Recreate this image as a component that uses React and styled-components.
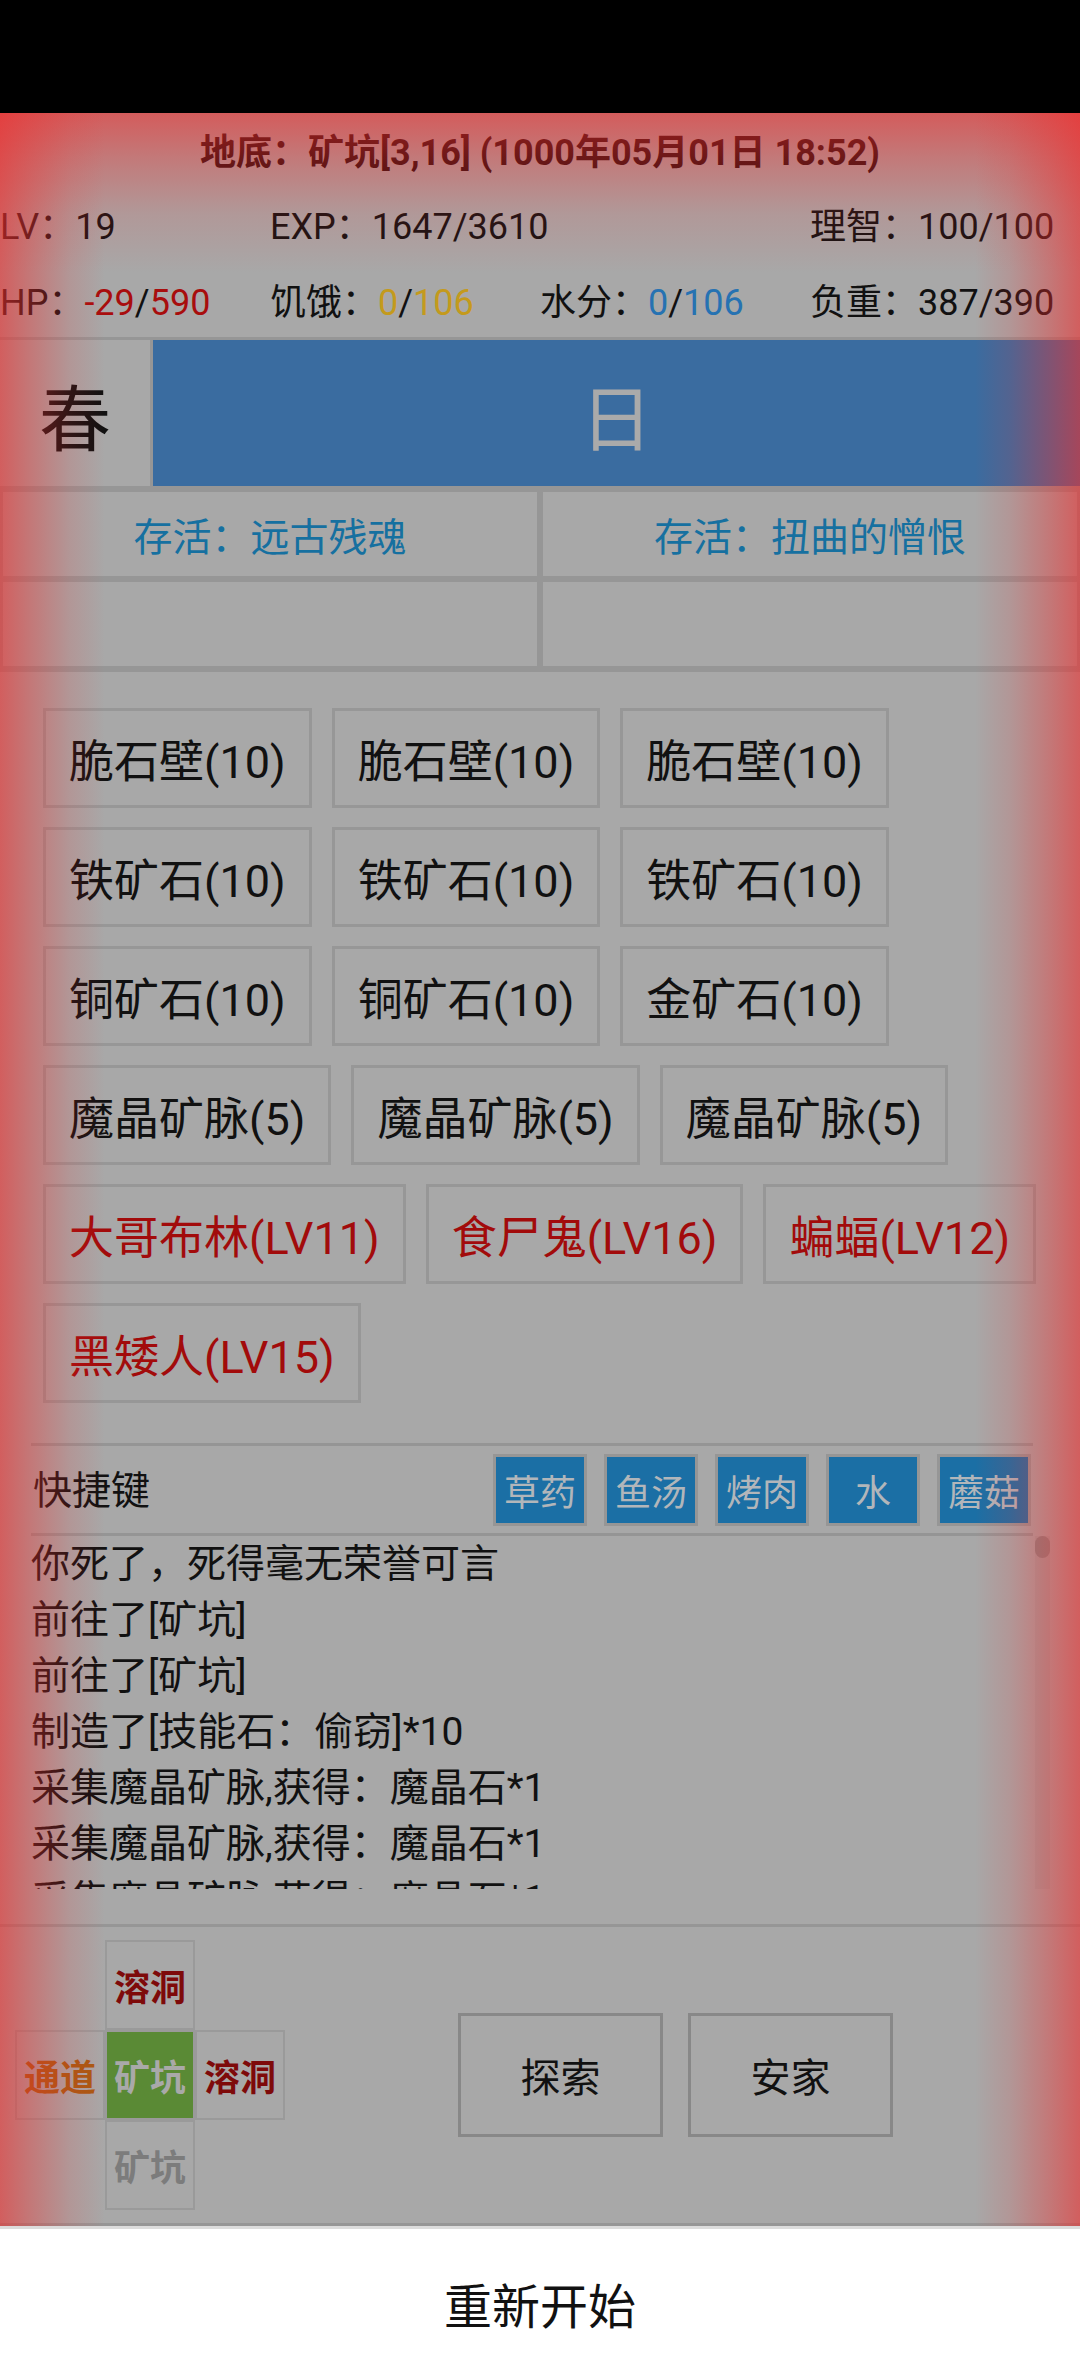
import React from 'react';
import styled, { createGlobalStyle } from 'styled-components';

const GlobalStyle = createGlobalStyle`
  html, body { margin: 0; padding: 0; background: #fff; }
  body {
    width: 1080px;
    height: 2376px;
    overflow: hidden;
    font-family: Roboto, "Noto Sans CJK SC", "Noto Sans", sans-serif;
    color: #111;
  }
  * { box-sizing: border-box; }
`;

const Screen = styled.div`
  position: relative;
  width: 1080px;
  height: 2376px;
  display: flex;
  flex-direction: column;
  background: #a8a8a8;
  overflow: hidden;
`;

const StatusBar = styled.div`
  flex: none;
  height: 113px;
  background: #000;
`;

const Title = styled.div`
  height: 72px;
  display: flex;
  align-items: center;
  justify-content: center;
  font-size: 36px;
  font-weight: 700;
  color: #1c0a0a;
  white-space: pre;
`;

const StatRow = styled.div`
  height: 76px;
  display: grid;
  grid-template-columns: repeat(4, 270px);
  align-items: center;
  font-size: 36px;
`;

const Stat = styled.span`
  white-space: nowrap;
  grid-column: ${(p) => p.$col || 'auto'};
`;

const Val = styled.span`
  color: ${(p) => p.$c};
`;

const SeasonRow = styled.div`
  height: 152px;
  display: flex;
  border-top: 3px solid #969696;
  border-bottom: 3px solid #969696;
`;

const SeasonCell = styled.div`
  width: 153px;
  border-right: 3px solid #969696;
  display: flex;
  align-items: center;
  justify-content: center;
  font-size: 72px;
  color: #111;
`;

const DayCell = styled.div`
  flex: 1;
  background: #3a6ca0;
  display: flex;
  align-items: center;
  justify-content: center;
  font-size: 72px;
  color: #aaaaaa;
`;

const BuffGrid = styled.div`
  display: grid;
  grid-template-columns: 1fr 1fr;
  border-bottom: 3px solid #969696;
`;

const BuffCell = styled.div`
  height: 90px;
  border: 3px solid #969696;
  display: flex;
  align-items: center;
  justify-content: center;
  font-size: 39px;
  color: #1670a0;
`;

const Items = styled.div`
  display: flex;
  flex-wrap: wrap;
  align-content: flex-start;
  gap: 19px 20px;
  padding: 36px 20px 40px 43px;
`;

const ItemButton = styled.div`
  height: 100px;
  padding: 0 23px;
  border: 3px solid #979797;
  display: flex;
  align-items: center;
  font-size: 45px;
  white-space: nowrap;
  color: ${(p) => (p.$enemy ? '#a20b0b' : '#111')};
`;

const Panel = styled.div`
  margin: 0 30px 0 31px;
`;

const ShortcutBar = styled.div`
  height: 93px;
  margin-right: 17px;
  border-top: 3px solid #959595;
  border-bottom: 3px solid #959595;
  display: flex;
  align-items: center;
`;

const ShortcutLabel = styled.div`
  flex: 1;
  padding-left: 2px;
  padding-bottom: 6px;
  font-size: 39px;
`;

const ShortcutButtons = styled.div`
  display: flex;
  gap: 17px;
  padding-right: 2px;
`;

const ShortcutButton = styled.div`
  width: 94px;
  height: 72px;
  border: 3px solid #969696;
  background: #1b6fa5;
  color: #b2b6ba;
  font-size: 36px;
  display: flex;
  align-items: center;
  justify-content: center;
`;

const LogBox = styled.div`
  position: relative;
  height: 353px;
  overflow: hidden;
  padding-right: 20px;
`;

const LogLine = styled.div`
  font-size: 39px;
  line-height: 56px;
  height: 56px;
  white-space: nowrap;
`;

const ScrollTrack = styled.div`
  position: absolute;
  right: 0;
  top: 0;
  bottom: 0;
  width: 15px;
  background: rgba(0, 0, 0, 0.03);
`;

const ScrollThumb = styled.div`
  position: absolute;
  right: 0;
  top: 0;
  width: 15px;
  height: 22px;
  border-radius: 8px;
  background: #878787;
`;

const NavSection = styled.div`
  margin-top: 35px;
  height: 302px;
  border-top: 3px solid #969696;
  border-bottom: 3px solid #969696;
  display: flex;
  align-items: center;
  padding: 0 14px 0 15px;
`;

const MapGrid = styled.div`
  display: grid;
  grid-template-columns: repeat(3, 90px);
  grid-template-rows: repeat(3, 90px);
`;

const MapCell = styled.div`
  grid-column: ${(p) => p.$col};
  grid-row: ${(p) => p.$row};
  border: 2px solid #9a9a9a;
  background: ${(p) => p.$bg || 'transparent'};
  color: ${(p) => p.$c};
  font-size: 36px;
  font-weight: 700;
  display: flex;
  align-items: center;
  justify-content: center;
`;

const Actions = styled.div`
  flex: 1;
  display: flex;
  justify-content: center;
  gap: 25px;
`;

const ActionButton = styled.div`
  width: 205px;
  height: 124px;
  border: 3px solid #888;
  display: flex;
  align-items: center;
  justify-content: center;
  font-size: 40px;
  color: #111;
`;

const BottomBar = styled.div`
  position: relative;
  z-index: 10;
  height: 150px;
  background: #fff;
  border-top: 3px solid #dcdcdc;
  display: flex;
  align-items: center;
  justify-content: center;
  font-size: 48px;
  color: #111;
`;

const Vignette = styled.div`
  position: absolute;
  top: 113px;
  left: 0;
  right: 0;
  bottom: 0;
  z-index: 5;
  pointer-events: none;
  background:
    linear-gradient(to right, rgba(238, 45, 45, 0.6) 0px, rgba(238, 45, 45, 0.38) 32px, rgba(238, 45, 45, 0.14) 70px, rgba(238, 45, 45, 0) 105px),
    linear-gradient(to left, rgba(238, 45, 45, 0.6) 0px, rgba(238, 45, 45, 0.38) 32px, rgba(238, 45, 45, 0.14) 70px, rgba(238, 45, 45, 0) 105px),
    linear-gradient(to bottom, rgba(238, 45, 45, 0.62) 0px, rgba(238, 45, 45, 0.38) 45px, rgba(238, 45, 45, 0.13) 100px, rgba(238, 45, 45, 0) 160px);
`;

const items = [
  ['脆石壁(10)'], ['脆石壁(10)'], ['脆石壁(10)'],
  ['铁矿石(10)'], ['铁矿石(10)'], ['铁矿石(10)'],
  ['铜矿石(10)'], ['铜矿石(10)'], ['金矿石(10)'],
  ['魔晶矿脉(5)'], ['魔晶矿脉(5)'], ['魔晶矿脉(5)'],
  ['大哥布林(LV11)', true], ['食尸鬼(LV16)', true], ['蝙蝠(LV12)', true],
  ['黑矮人(LV15)', true],
];

const shortcuts = ['草药', '鱼汤', '烤肉', '水', '蘑菇'];

const logs = [
  '你死了，死得毫无荣誉可言',
  '前往了[矿坑]',
  '前往了[矿坑]',
  '制造了[技能石：偷窃]*10',
  '采集魔晶矿脉,获得：魔晶石*1',
  '采集魔晶矿脉,获得：魔晶石*1',
  '采集魔晶矿脉,获得：魔晶石*1',
  '采集魔晶矿脉,获得：魔晶石*1',
];

export default function App() {
  return (
    <>
      <GlobalStyle />
      <Screen>
        <StatusBar />
        <Title>地底：矿坑[3,16] (1000年05月01日 18:52)</Title>
        <StatRow>
          <Stat>LV：19</Stat>
          <Stat>EXP：1647/3610</Stat>
          <Stat $col={4}>理智：100/100</Stat>
        </StatRow>
        <StatRow>
          <Stat>
            HP：<Val $c="#a80d0d">-29</Val>/<Val $c="#a80d0d">590</Val>
          </Stat>
          <Stat>
            饥饿：<Val $c="#c49a1c">0</Val>/<Val $c="#c49a1c">106</Val>
          </Stat>
          <Stat>
            水分：<Val $c="#2672b2">0</Val>/<Val $c="#2672b2">106</Val>
          </Stat>
          <Stat>负重：387/390</Stat>
        </StatRow>
        <SeasonRow>
          <SeasonCell>春</SeasonCell>
          <DayCell>日</DayCell>
        </SeasonRow>
        <BuffGrid>
          <BuffCell>存活：远古残魂</BuffCell>
          <BuffCell>存活：扭曲的憎恨</BuffCell>
          <BuffCell />
          <BuffCell />
        </BuffGrid>
        <Items>
          {items.map(([label, enemy], i) => (
            <ItemButton key={i} $enemy={enemy}>{label}</ItemButton>
          ))}
        </Items>
        <Panel>
          <ShortcutBar>
            <ShortcutLabel>快捷键</ShortcutLabel>
            <ShortcutButtons>
              {shortcuts.map((s) => (
                <ShortcutButton key={s}>{s}</ShortcutButton>
              ))}
            </ShortcutButtons>
          </ShortcutBar>
          <LogBox>
            {logs.map((l, i) => (
              <LogLine key={i}>{l}</LogLine>
            ))}
            <ScrollTrack />
            <ScrollThumb />
          </LogBox>
        </Panel>
        <NavSection>
          <MapGrid>
            <MapCell $col={2} $row={1} $c="#7e0a0a">溶洞</MapCell>
            <MapCell $col={1} $row={2} $c="#a85a12">通道</MapCell>
            <MapCell $col={2} $row={2} $c="#a9a9a9" $bg="#5a8a35">矿坑</MapCell>
            <MapCell $col={3} $row={2} $c="#7e0a0a">溶洞</MapCell>
            <MapCell $col={2} $row={3} $c="#7c7c7c">矿坑</MapCell>
          </MapGrid>
          <Actions>
            <ActionButton>探索</ActionButton>
            <ActionButton>安家</ActionButton>
          </Actions>
        </NavSection>
        <BottomBar>重新开始</BottomBar>
        <Vignette />
      </Screen>
    </>
  );
}
